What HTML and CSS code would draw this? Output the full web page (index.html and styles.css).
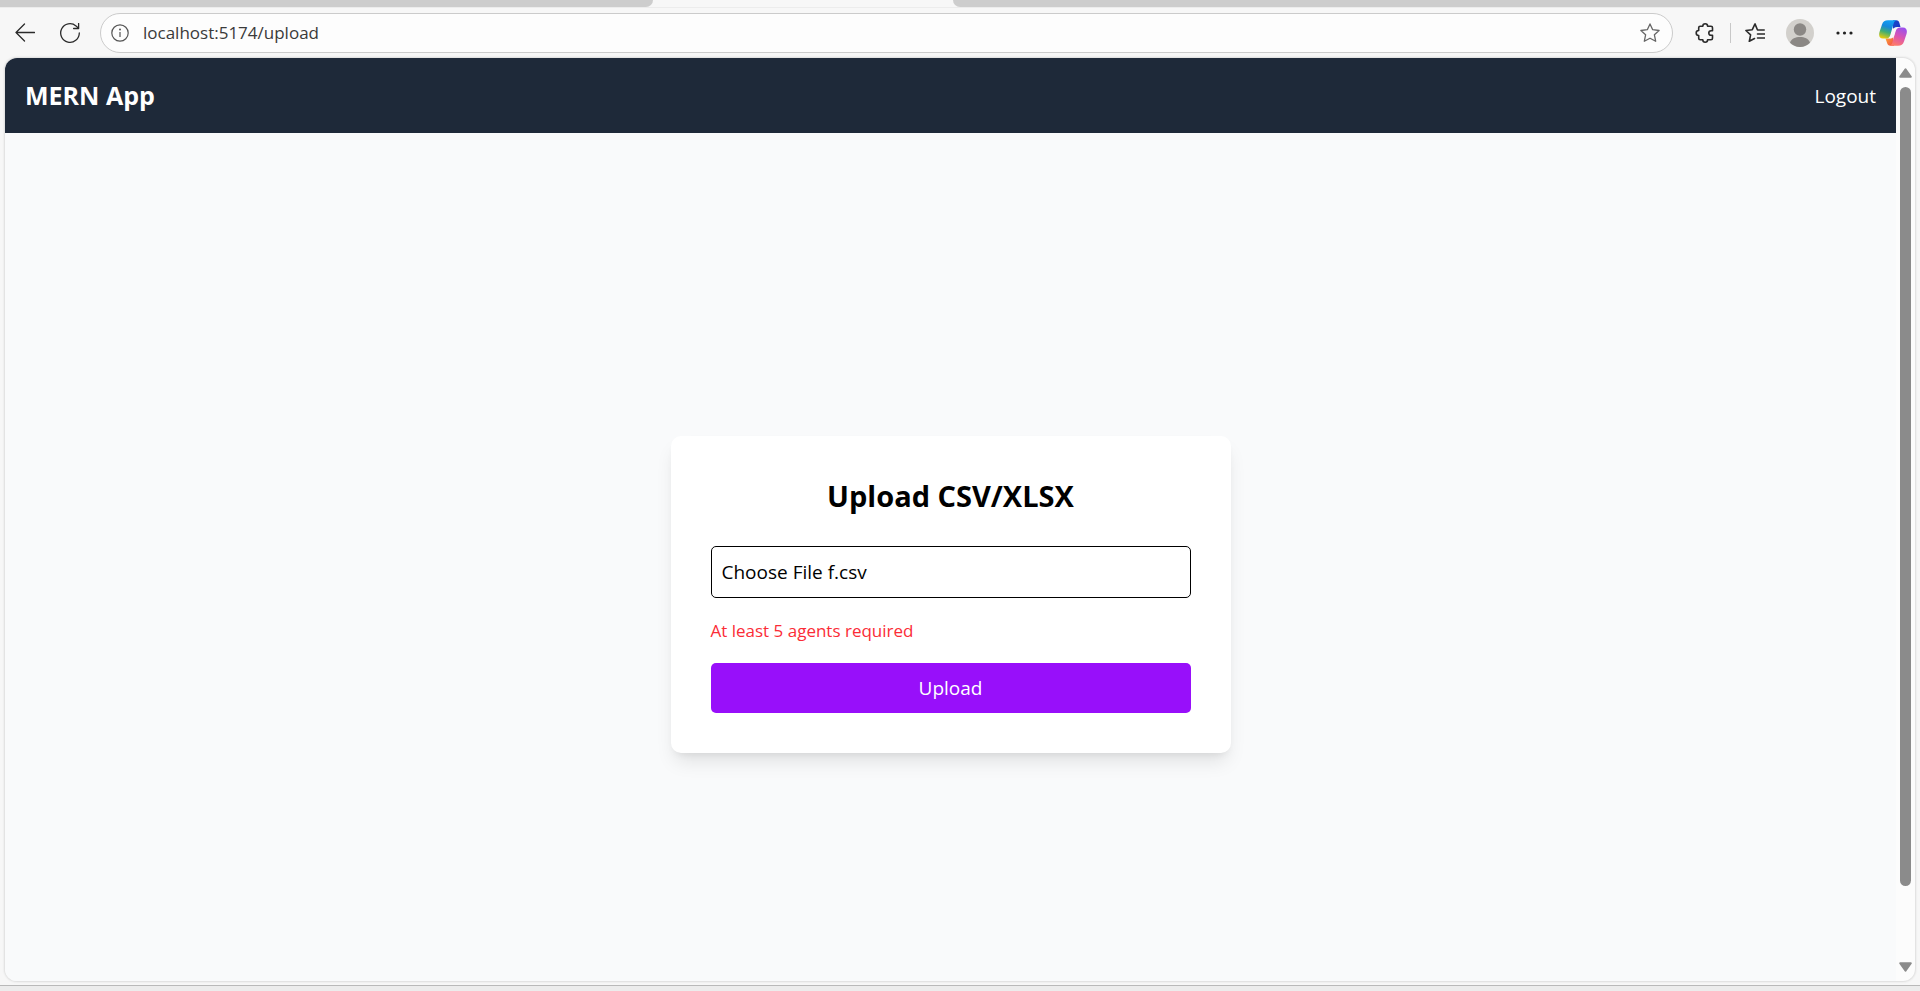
FILE: index.html
```html
<!DOCTYPE html>
<html lang="en">
<head>
<meta charset="utf-8">
<title>MERN App</title>
<link rel="stylesheet" href="styles.css">
</head>
<body>
<div class="browser">
  <div class="tabstrip">
    <div class="tabs-before"></div>
    <div class="tab-active"></div>
    <div class="tabs-after"></div>
  </div>
  <div class="toolbar">
    <button class="tool" type="button" aria-label="Back">
      <svg class="icon" viewBox="0 0 20 20"><path d="M19.5 9.5H1M9.5 1L1 9.5l8.500 8.500"/></svg>
    </button>
    <button class="tool reload" type="button" aria-label="Refresh">
      <svg class="icon" viewBox="0 0 20 20"><path d="M19.300 10a9.300 9.300 0 1 1-3.300-7.100l2.500 2.400M18.600.5v5h-5"/></svg>
    </button>
    <div class="address">
      <svg class="icon-info" viewBox="0 0 18 18"><circle cx="9" cy="9" r="8.200"/><path d="M9 8v5"/><circle class="dot" cx="9" cy="5.500" r="1"/></svg>
      <input class="url" type="text" aria-label="Address" value="localhost:5174/upload">
      <button class="tool favorite" type="button" aria-label="Add to favorites">
        <svg class="icon grey" viewBox="0 0 20 20"><path d="M10 .9l2.700 5.800 6.400.8-4.700 4.300 1.300 6.500L10 15.200l-5.700 3.100 1.300-6.500L.9 7.500l6.400-.8z"/></svg>
      </button>
    </div>
    <button class="tool" type="button" aria-label="Extensions">
      <svg class="icon bold" viewBox="0 0 20 20"><path d="M7.800 3.300a2.400 2.500 0 0 1 4.800 0H16a1.500 1.500 0 0 1 1.500 1.500v2.900h-1.400a2.300 2.300 0 0 0 0 4.600h1.400v2.900a1.500 1.500 0 0 1-1.500 1.500h-3.400a2.400 2.500 0 0 1-4.800 0H5.200a1.500 1.500 0 0 1-1.500-1.500v-2.700a2.500 2.500 0 0 1 0-5V4.800a1.500 1.500 0 0 1 1.500-1.500z"/></svg>
    </button>
    <div class="divider"></div>
    <button class="tool collections" type="button" aria-label="Favorites">
      <svg class="icon bold" viewBox="0 0 20 20"><path d="M19.200 7H12.500L10 .9 7.300 6.700.9 7.500l4.700 4.300-1.300 6.500 5.200-2.800M12.500 11h7M12.500 15h7"/></svg>
    </button>
    <button class="tool profile" type="button" aria-label="Profile">
      <svg class="avatar" viewBox="0 0 28 28"><circle cx="14" cy="14" r="14" fill="#d2d0cc"/><circle cx="14" cy="10.500" r="6.200" fill="#8b8885"/><path d="M4 23.800C5.500 19.600 9.500 18 14 18s8.500 1.600 10 5.800a14 14 0 0 1-20 0z" fill="#8b8885"/></svg>
    </button>
    <button class="tool more" type="button" aria-label="Settings and more">
      <svg class="icon dots" viewBox="0 0 20 20"><circle cx="3" cy="10" r="1.600"/><circle cx="9.500" cy="10" r="1.600"/><circle cx="16" cy="10" r="1.600"/></svg>
    </button>
    <button class="tool copilot" type="button" aria-label="Copilot">
      <svg class="copilot-logo" viewBox="0 0 28 26">
        <defs>
          <linearGradient id="left" x1=".6" y1="0" x2=".3" y2="1"><stop offset="0" stop-color="#12a0f5"/><stop offset=".35" stop-color="#1688dc"/><stop offset=".65" stop-color="#42ae72"/><stop offset="1" stop-color="#e8cb0b"/></linearGradient>
          <linearGradient id="right" x1=".7" y1="0" x2=".3" y2="1"><stop offset="0" stop-color="#9b50ed"/><stop offset=".5" stop-color="#dc55b0"/><stop offset="1" stop-color="#ff7b65"/></linearGradient>
          <linearGradient id="fold-top" x1="0" y1="0" x2="1" y2="1"><stop offset="0" stop-color="#1749c9"/><stop offset="1" stop-color="#1b36c4"/></linearGradient>
          <linearGradient id="fold-bottom" x1="0" y1="0" x2="1" y2="1"><stop offset="0" stop-color="#ffb02e"/><stop offset="1" stop-color="#f0484d"/></linearGradient>
        </defs>
        <path d="M14 .3h3.200c2 0 2.800 1.200 3.300 3l1 3.700h-3.300c-2.200 0-3.400 1-4.200 3z" fill="url(#fold-top)"/>
        <path d="M6.500 18.500h3.300c2.200 0 3.400-1 4.200-3l1 10.200h-3.500c-2 0-3-1-3.500-3z" fill="url(#fold-bottom)"/>
        <path d="M9 .3h8.500c-1.700.2-2.500 1.700-3 3.600l-3.200 11c-.8 2.500-2 3.700-4.500 3.700H4c-3.500 0-4.500-3-3.500-6.500L3 4.500C4 1.500 5.800.3 9 .3z" fill="url(#left)"/>
        <path d="M19 25.700h-8.500c1.700-.2 2.500-1.700 3-3.600l3.200-11c.8-2.500 2-3.700 4.500-3.700H24c3.500 0 4.500 3 3.500 6.500L25 21.500c-1 3-2.800 4.200-6 4.200z" fill="url(#right)"/>
        <path d="M18.300 7.500c-1.200.7-1.600 2-2 3.400l-1.600 5.300c-.5 1.500-1.600 2.300-4.600 2.300 1-.8 1.300-1.800 1.700-3.100l1.700-5.400c.6-1.800 1.800-2.500 4.800-2.500z" fill="#fbf7f8"/>
      </svg>
    </button>
  </div>

  <div class="viewport">
    <div class="page">
      <nav class="navbar">
        <h1 class="brand">MERN App</h1>
        <button class="logout" type="button">Logout</button>
      </nav>
      <main class="screen">
        <form class="card">
          <h2 class="card-title">Upload CSV/XLSX</h2>
          <input class="file" id="file" type="file" accept=".csv,.xlsx" aria-label="CSV or XLSX file">
          <p class="error">At least 5 agents required</p>
          <button class="submit" type="button">Upload</button>
        </form>
      </main>
    </div>
    <div class="scrollbar">
      <svg class="arrow" viewBox="0 0 13 10"><path d="M6.500 1.200L11.800 8.800H1.200z"/></svg>
      <div class="track"><div class="thumb"></div></div>
      <svg class="arrow" viewBox="0 0 13 10"><path d="M6.500 8.800L11.800 1.200H1.200z"/></svg>
    </div>
  </div>
  <div class="bottom-edge"></div>
</div>
<script src="script.js"></script>
</body>
</html>
```
FILE: styles.css
```css
* {
  box-sizing: border-box;
}

body {
  margin: 0;
  font-family: "Open Sans", "Noto Sans", sans-serif;
  background: #f7f7f7;
}

button,
input {
  font-family: inherit;
}

.browser {
  display: flex;
  flex-direction: column;
  height: 100vh;
  overflow: hidden;
}

/* Tab strip */
.tabstrip {
  display: flex;
  height: 7px;
  flex: none;
}

.tabs-before,
.tabs-after {
  background: #cdcdcd;
}

.tabs-before {
  width: 34%;
  border-bottom-right-radius: 10px;
}

.tab-active {
  width: 300px;
}

.tabs-after {
  flex: 1;
  border-bottom-left-radius: 10px;
}

/* Toolbar */
.toolbar {
  display: flex;
  align-items: center;
  flex: none;
  height: 51px;
  padding: 0 13px 0 15px;
  border-top: 1px solid #ececec;
}

.tool {
  display: flex;
  flex: none;
  padding: 0;
  border: 0;
  background: none;
}

.icon {
  width: 20px;
  height: 20px;
  fill: none;
  stroke: #2b2b2b;
  stroke-width: 1.3;
  stroke-linecap: round;
  stroke-linejoin: round;
}

.icon.bold {
  stroke-width: 1.6;
}

.icon.grey {
  stroke: #666;
}

.icon.dots {
  fill: #222;
  stroke: none;
}

.reload {
  margin-left: 25px;
}

.address {
  display: flex;
  align-items: center;
  flex: 1;
  height: 40px;
  margin: 0 22px 0 20px;
  padding: 0 12px 0 10px;
  border: 1px solid #cbcbcb;
  border-radius: 20px;
  background: #fdfdfd;
}

.icon-info {
  width: 18px;
  height: 18px;
  fill: none;
  stroke: #555;
  stroke-width: 1.2;
}

.icon-info .dot {
  fill: #555;
  stroke: none;
}

.url {
  flex: 1;
  min-width: 0;
  margin-left: 14px;
  padding: 0;
  border: 0;
  background: none;
  color: #3a3a3a;
  font-size: 17px;
  line-height: 24px;
}

.divider {
  width: 1px;
  height: 20px;
  margin: 0 14px 0 15px;
  background: #c8c8c8;
}

.profile {
  margin-left: 21px;
}

.avatar {
  width: 28px;
  height: 28px;
}

.more {
  margin-left: 21px;
}

.copilot {
  margin-left: 24px;
}

.copilot-logo {
  width: 28px;
  height: 26px;
}

/* Web page area */
.viewport {
  display: flex;
  flex: 1;
  min-height: 0;
  margin: 0 5px;
  overflow: hidden;
  border-radius: 12px;
  background: #fcfcfc;
  box-shadow: 0 0 2px 1px #dcdcdc;
}

.page {
  flex: 1;
  height: 100%;
  overflow: hidden;
  background: #f9fafb;
}

.navbar {
  display: flex;
  align-items: center;
  justify-content: space-between;
  height: 75px;
  padding: 0 20px;
  background: #1e2939;
  color: #fff;
}

.brand {
  margin: 0;
  font-size: 25px;
  line-height: 35px;
}

.logout {
  padding: 0;
  border: 0;
  background: none;
  color: #fff;
  font-size: 19px;
  line-height: 30px;
}

.screen {
  display: flex;
  align-items: center;
  justify-content: center;
  height: 100%;
}

.card {
  display: flex;
  flex-direction: column;
  gap: 20px;
  width: 560px;
  padding: 40px;
  border-radius: 10px;
  background: #fff;
  box-shadow: 0 12px 19px -4px rgba(0, 0, 0, .1), 0 5px 8px -5px rgba(0, 0, 0, .1);
}

.card-title {
  margin: 0 0 10px;
  font-size: 29px;
  line-height: 40px;
  text-align: center;
}

.file {
  width: 100%;
  padding: 10px;
  border: 1px solid #000;
  border-radius: 5px;
  color: #000;
  font-size: 19px;
  line-height: 30px;
}

.file::file-selector-button {
  margin: 0 5px 0 0;
  padding: 0;
  border: 0;
  background: none;
  color: inherit;
  font: inherit;
}

.error {
  margin: 0;
  color: #fb2c36;
  font-size: 17px;
  line-height: 25px;
}

.submit {
  padding: 10px;
  border: 0;
  border-radius: 5px;
  background: #980ffa;
  color: #fff;
  font-size: 19px;
  line-height: 30px;
}

/* Scrollbar */
.scrollbar {
  display: flex;
  flex-direction: column;
  align-items: center;
  flex: none;
  width: 19px;
  padding: 10px 0 9px;
}

.arrow {
  flex: none;
  width: 13px;
  height: 10px;
  fill: #8b8b8b;
  stroke: #8b8b8b;
  stroke-width: 2;
  stroke-linejoin: round;
}

.track {
  flex: 1;
  margin: 9px 0;
}

.thumb {
  width: 11px;
  height: calc(100% * 12 / 13);
  border-radius: 6px;
  background: #8b8b8b;
}

.bottom-edge {
  flex: none;
  height: 6px;
  margin-top: 4px;
  border-top: 1px solid #b9b9b9;
  background: #ececec;
}
```
FILE: script.js
```js
// Preselects the file that the form shows as chosen.
const picked = new DataTransfer();
picked.items.add(new File(["name,phone,notes\n"], "f.csv", { type: "text/csv" }));
document.getElementById("file").files = picked.files;
```
